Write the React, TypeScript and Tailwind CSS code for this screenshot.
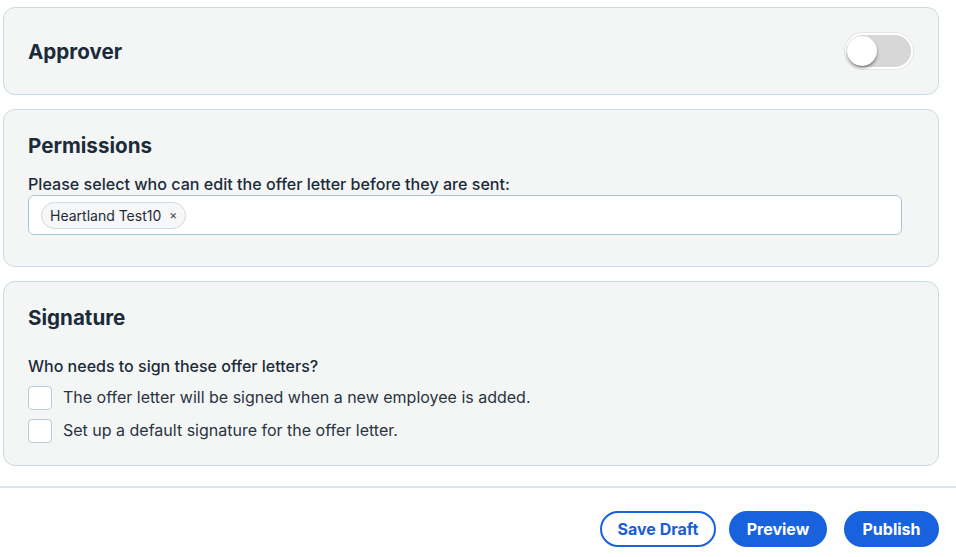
import React from 'react';

function Card({ children, className = '' }: { children: React.ReactNode; className?: string }) {
  return (
    <div className={`w-[936px] rounded-[12px] border border-[#c9dae6] bg-[#f4f6f6] px-6 ${className}`}>
      {children}
    </div>
  );
}

function Checkbox({ label }: { label: string }) {
  return (
    <label className="flex items-center gap-[11px] h-6">
      <span className="w-6 h-6 rounded-[4px] border border-[#b9cadb] bg-white shrink-0" />
      <span className="text-[16px] text-[#2a3340] -mt-[2px]">{label}</span>
    </label>
  );
}

function App() {
  return (
    <div className="min-h-screen bg-white text-[#1c2b39] pt-[7px] pl-[3px]" style={{ fontFamily: 'Inter, "Noto Sans", sans-serif' }}>
      <Card className="h-[88px] flex items-center justify-between">
        <h2 className="text-[20.6px] font-bold leading-7 mt-[1px]">Approver</h2>
        <div className="w-[68px] h-[36px] rounded-full bg-[#d7d7d7] border-2 border-white shadow-[0_0_0_1px_#e6e6e6] flex items-center mr-[1px] -mt-[1px]">
          <span className="w-[30px] h-[30px] rounded-full bg-white shadow-[0_2px_3px_rgba(0,0,0,0.45)]" />
        </div>
      </Card>

      <Card className="mt-[14px] pt-[22px] pb-[31px]">
        <h2 className="text-[20.6px] font-bold leading-7">Permissions</h2>
        <p className="mt-[14px] text-[16.1px] font-medium leading-5">Please select who can edit the offer letter before they are sent:</p>
        <div className="mt-px w-[874px] h-[40px] rounded-[6px] border border-[#a9c4da] bg-white flex items-center pl-3">
          <span className="h-[27px] rounded-full border border-[#d3d8dc] bg-[#f6f7f8] flex items-center pl-2 pr-2 gap-[8px] text-[14px] text-[#1f2a35]">
            Heartland Test10
            <span className="text-[12px] text-[#444] leading-none">×</span>
          </span>
        </div>
      </Card>

      <Card className="mt-[14px] pt-[22px] pb-[22px]">
        <h2 className="text-[20.6px] font-bold leading-7">Signature</h2>
        <p className="mt-6 text-[16px] font-medium leading-5">Who needs to sign these offer letters?</p>
        <div className="mt-[10px] flex flex-col gap-[9px]">
          <Checkbox label="The offer letter will be signed when a new employee is added." />
          <Checkbox label="Set up a default signature for the offer letter." />
        </div>
      </Card>

      <div className="mt-[20px] -ml-[3px] border-t-2 border-[#dde4e9]" />

      <div className="w-[936px] flex justify-end mt-[23px]">
        <button className="h-[36px] w-[116px] rounded-full border-2 border-[#1862de] bg-white text-[16px] font-bold text-[#1a5dd6]">Save Draft</button>
        <button className="ml-[13px] h-[36px] w-[98px] rounded-full bg-[#1862de] text-[16px] font-bold text-white">Preview</button>
        <button className="ml-[17px] h-[36px] w-[95px] rounded-full bg-[#1862de] text-[16px] font-bold text-white">Publish</button>
      </div>
    </div>
  );
}

export default App;
